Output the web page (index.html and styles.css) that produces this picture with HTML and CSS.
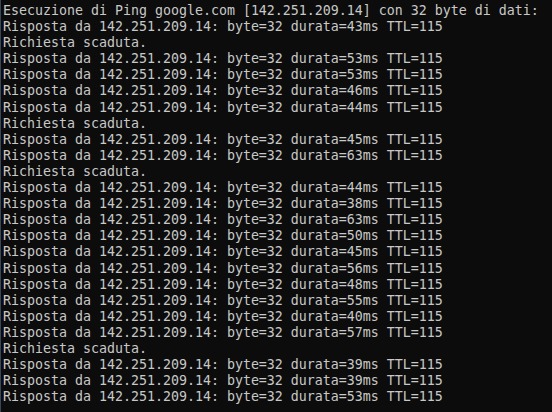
FILE: index.html
```html
<!DOCTYPE html>
<html>
<head>
<meta charset="utf-8">
<link rel="stylesheet" href="styles.css">
</head>
<body>
<div class="console">
<pre class="output">Esecuzione di Ping google.com [142.251.209.14] con 32 byte di dati:
Risposta da 142.251.209.14: byte=32 durata=43ms TTL=115
Richiesta scaduta.
Risposta da 142.251.209.14: byte=32 durata=53ms TTL=115
Risposta da 142.251.209.14: byte=32 durata=53ms TTL=115
Risposta da 142.251.209.14: byte=32 durata=46ms TTL=115
Risposta da 142.251.209.14: byte=32 durata=44ms TTL=115
Richiesta scaduta.
Risposta da 142.251.209.14: byte=32 durata=45ms TTL=115
Risposta da 142.251.209.14: byte=32 durata=63ms TTL=115
Richiesta scaduta.
Risposta da 142.251.209.14: byte=32 durata=44ms TTL=115
Risposta da 142.251.209.14: byte=32 durata=38ms TTL=115
Risposta da 142.251.209.14: byte=32 durata=63ms TTL=115
Risposta da 142.251.209.14: byte=32 durata=50ms TTL=115
Risposta da 142.251.209.14: byte=32 durata=45ms TTL=115
Risposta da 142.251.209.14: byte=32 durata=56ms TTL=115
Risposta da 142.251.209.14: byte=32 durata=48ms TTL=115
Risposta da 142.251.209.14: byte=32 durata=55ms TTL=115
Risposta da 142.251.209.14: byte=32 durata=40ms TTL=115
Risposta da 142.251.209.14: byte=32 durata=57ms TTL=115
Richiesta scaduta.
Risposta da 142.251.209.14: byte=32 durata=39ms TTL=115
Risposta da 142.251.209.14: byte=32 durata=39ms TTL=115
Risposta da 142.251.209.14: byte=32 durata=53ms TTL=115</pre>
</div>
</body>
</html>
```
FILE: styles.css
```css
html, body {
  margin: 0;
  padding: 0;
  background: #0c0c0c;
}
.console {
  width: 552px;
  height: 412px;
  box-sizing: border-box;
  border-left: 1px solid #3a4656;
  background: #0c0c0c;
  overflow: hidden;
  padding: 3px 0 0 2px;
}
.output {
  margin: 0;
  font-family: "DejaVu Sans Mono", "Liberation Mono", monospace;
  font-size: 13.29px;
  line-height: 16.1px;
  color: #c8c8c8;
  white-space: pre;
}
```
